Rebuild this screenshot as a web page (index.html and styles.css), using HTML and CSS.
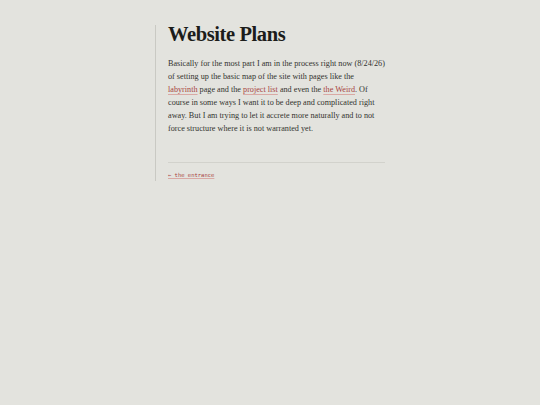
FILE: index.html
```html
<!DOCTYPE html>
<html>
<head>
<meta charset="utf-8">
<link rel="stylesheet" href="styles.css">
</head>
<body>
<main class="page">
  <h1 class="title">Website Plans</h1>
  <p class="body">Basically for the most part I am in the process right now (8/24/26) of setting up the basic map of the site with pages like the <a href="#">labyrinth</a> page and the <a href="#">project list</a> and even the <a href="#">the Weird</a>. Of course in some ways I want it to be deep and complicated right away. But I am trying to let it accrete more naturally and to not force structure where it is not warranted yet.</p>
  <hr class="rule">
  <a class="back" href="#">← the entrance</a>
</main>
</body>
</html>
```
FILE: styles.css
```css
html, body {
  margin: 0;
  padding: 0;
  background: #e3e3de;
}
.page {
  margin-left: 155px;
  margin-top: 25px;
  width: 217px;
  padding-left: 12px;
  padding-bottom: 2px;
  border-left: 1px solid #c9c9c3;
}
.title {
  margin: 0;
  font-family: "Liberation Serif", serif;
  font-weight: bold;
  font-size: 20.5px;
  line-height: 18px;
  color: #1c1c1a;
  letter-spacing: -0.4px;
}
.body {
  margin: 14px 0 0 0;
  font-family: "Liberation Serif", serif;
  font-size: 8.2px;
  line-height: 13px;
  color: #33332f;
}
.body a {
  color: #a8453f;
  text-decoration: underline;
  text-decoration-color: #d9a9a4;
  text-underline-offset: 1.5px;
}
.rule {
  margin: 27px 0 0 0;
  border: 0;
  border-top: 1px solid #d2d2cc;
  height: 0;
}
.back {
  display: block;
  margin-top: 8px;
  font-family: "DejaVu Sans Mono", monospace;
  font-size: 5.5px;
  line-height: 8px;
  color: #a8453f;
  text-decoration: underline;
  text-decoration-color: #d9a9a4;
}
```
